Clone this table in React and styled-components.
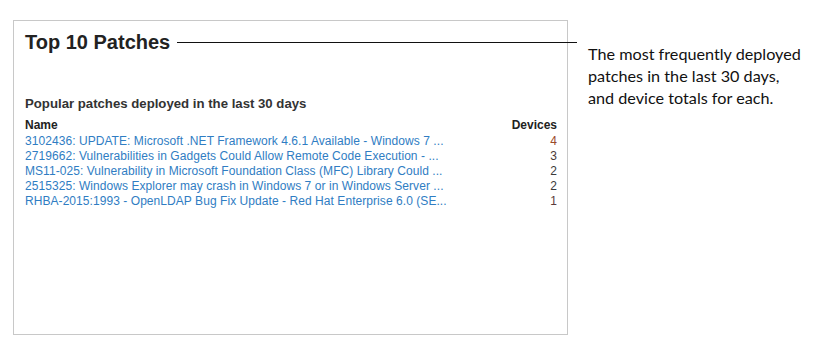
import styled, { createGlobalStyle } from 'styled-components';

const GlobalStyle = createGlobalStyle`
  body {
    margin: 0;
    background: #fff;
    font-family: "Liberation Sans", Arial, sans-serif;
  }
`

const Page = styled.div`
  position: relative;
  display: flex;
  align-items: flex-start;
  padding: 20px 0 0 13px;
  width: 840px;
  height: 350px;
  box-sizing: border-box;
`

const Panel = styled.section`
  width: 555px;
  height: 315px;
  box-sizing: border-box;
  border: 1px solid #c8c8c8;
  padding: 9px 10px 0 11px;
`

const Title = styled.h2`
  margin: 0;
  font-size: 20px;
  line-height: 24px;
  font-weight: bold;
  color: #222;
`

const Subtitle = styled.h3`
  margin: 42px 0 6px;
  font-size: 13.2px;
  line-height: 16px;
  font-weight: bold;
  color: #333;
`

const Table = styled.div`
  display: grid;
  grid-template-columns: 1fr auto;
  font-size: 12px;
  line-height: 15px;
`

const HeadCell = styled.div`
  font-weight: bold;
  color: #222;
  margin-bottom: 1px;
  text-align: ${p => (p.$right ? 'right' : 'left')};
`

const PatchLink = styled.a`
  color: #2f7dc3;
  text-decoration: none;
  white-space: nowrap;
  letter-spacing: 0.06px;
`

const Count = styled.div`
  text-align: right;
  color: ${p => p.$tone};
`

const Leader = styled.div`
  position: absolute;
  top: 42px;
  left: 177px;
  width: 400px;
  height: 1px;
  background: #111;
`

const Note = styled.p`
  margin: 23px 0 0 20px;
  font-family: Lato, "Open Sans", sans-serif;
  font-size: 16.2px;
  line-height: 22px;
  color: #111;
`

const patches = [
  { name: '3102436: UPDATE: Microsoft .NET Framework 4.6.1 Available - Windows 7 ...', count: 4, tone: '#9a4a2a' },
  { name: '2719662: Vulnerabilities in Gadgets Could Allow Remote Code Execution - ...', count: 3, tone: '#4a3a36' },
  { name: 'MS11-025: Vulnerability in Microsoft Foundation Class (MFC) Library Could ...', count: 2, tone: '#3a3a3a' },
  { name: '2515325: Windows Explorer may crash in Windows 7 or in Windows Server ...', count: 2, tone: '#3a3a3a' },
  { name: 'RHBA-2015:1993 - OpenLDAP Bug Fix Update - Red Hat Enterprise 6.0 (SE...', count: 1, tone: '#5a3a3a' },
]

export default function App() {
  return (
    <Page>
      <GlobalStyle />
      <Panel>
        <Title>Top 10 Patches</Title>
        <Subtitle>Popular patches deployed in the last 30 days</Subtitle>
        <Table>
          <HeadCell>Name</HeadCell>
          <HeadCell $right>Devices</HeadCell>
          {patches.map(p => (
            <>
              <div key={p.name}>
                <PatchLink href="#">{p.name}</PatchLink>
              </div>
              <Count $tone={p.tone}>{p.count}</Count>
            </>
          ))}
        </Table>
      </Panel>
      <Leader />
      <Note>
        The most frequently deployed<br />
        patches in the last 30 days,<br />
        and device totals for each.
      </Note>
    </Page>
  )
}
